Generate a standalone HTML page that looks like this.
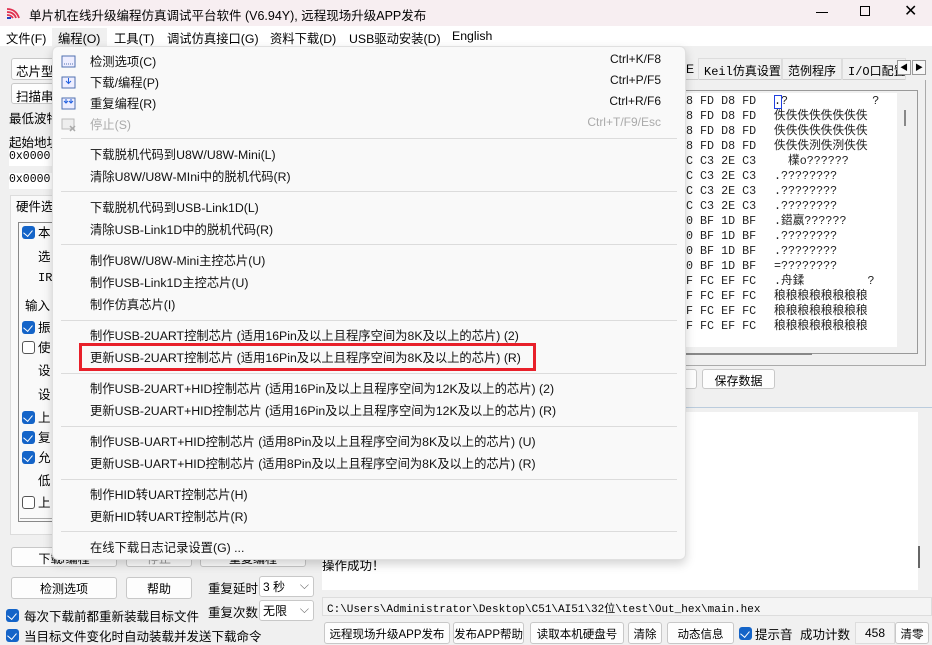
<!DOCTYPE html><html><head><meta charset="utf-8"><style>
*{box-sizing:border-box;margin:0;padding:0}
body{width:932px;height:644px;overflow:hidden;background:#f0f0f0;font-family:"Liberation Sans","Noto Sans CJK SC",sans-serif;font-size:12px;color:#000;position:relative}
.a{position:absolute;white-space:nowrap}
.btn{position:absolute;background:#fdfdfd;border:1px solid #c8c8c8;border-radius:3px;text-align:center;font-size:12px;white-space:nowrap;overflow:hidden}
.cb{position:absolute;width:13px;height:13px;border-radius:3px;background:#1464c8}
.cb:after{content:"";position:absolute;left:3px;top:2px;width:5px;height:7px;border:solid #fff;border-width:0 1.5px 1.5px 0;transform:rotate(40deg)}
.cbo{position:absolute;width:13px;height:13px;border-radius:3px;border:1px solid #555;background:#fff}
.mono{font-family:"Liberation Mono","Noto Sans CJK SC",monospace;font-size:12px}
.menu{position:absolute;left:52px;top:46px;width:634px;height:514px;background:#f9f9f9;border:1px solid #e0e0e0;border-radius:6px;box-shadow:0 4px 10px rgba(0,0,0,.18)}
.mi{position:absolute;left:37px;font-size:12.3px;color:#111}
.sep{position:absolute;left:8px;right:8px;height:1px;background:#dcdcdc}
.sc{position:absolute;right:24px;font-size:12px;color:#111}
.bb{font-size:11.5px;padding-top:3px}
</style></head><body>
<!-- title -->
<div class="a" style="left:0;top:0;width:932px;height:26px;background:#f7eef1"></div>
<svg class="a" style="left:6px;top:5px" width="16" height="16" viewBox="0 0 16 16"><path d="M1 4 Q10 4 13 13 M1 7 Q8 7 10 13 M1 10 Q5 10 7 13" stroke="#e03050" stroke-width="1.8" fill="none"/><rect x="1" y="12" width="4" height="2" fill="#2040c0"/></svg>
<div class="a" style="left:29px;top:5px;font-size:12.5px">单片机在线升级编程仿真调试平台软件 (V6.94Y), 远程现场升级APP发布</div>
<div class="a" style="left:816px;top:12px;width:12px;height:1px;background:#000"></div>
<div class="a" style="left:860px;top:6px;width:10px;height:10px;border:1px solid #000"></div>
<div class="a" style="left:904px;top:1px;font-size:16px">✕</div>
<!-- menubar -->
<div class="a" style="left:0;top:26px;width:932px;height:20px;background:#fff"></div>
<div class="a" style="left:52px;top:28px;width:55px;height:18px;background:#f0f0f0"></div>
<div class="a" style="left:6px;top:29px;font-size:12.3px">文件(F)</div>
<div class="a" style="left:58px;top:29px;font-size:12.3px">编程(O)</div>
<div class="a" style="left:114px;top:29px;font-size:12.3px">工具(T)</div>
<div class="a" style="left:167px;top:29px;font-size:12.3px">调试仿真接口(G)</div>
<div class="a" style="left:270px;top:29px;font-size:12.3px">资料下载(D)</div>
<div class="a" style="left:349px;top:29px;font-size:12.3px">USB驱动安装(D)</div>
<div class="a" style="left:452px;top:29px;font-size:12.3px">English</div>
<!-- left panel -->
<div class="btn" style="left:11px;top:58px;width:50px;height:22px;text-align:left;padding:2px 4px;font-size:12.5px">芯片型</div>
<div class="btn" style="left:11px;top:83px;width:50px;height:21px;text-align:left;padding:2px 4px;font-size:12.5px">扫描串</div>
<div class="a" style="left:9px;top:108px;font-size:12.5px">最低波特</div>
<div class="a" style="left:9px;top:132px;font-size:12.5px">起始地址</div>
<div class="a mono" style="left:9px;top:150px;width:50px;height:16px;background:#fff;font-size:11.5px;padding-top:0">0x0000</div>
<div class="a mono" style="left:9px;top:173px;width:50px;height:16px;background:#fff;font-size:11.5px;padding-top:0">0x0000</div>
<div class="a" style="left:10px;top:195px;width:50px;height:340px;border:1px solid #dcdcdc;background:#f9f9f9"></div>
<div class="a" style="left:16px;top:196px;font-size:12.5px">硬件选</div>
<div class="a" style="left:18px;top:222px;width:40px;height:300px;border:1px solid #888;border-right:none"></div>
<div class="cb" style="left:22px;top:226px"></div><div class="a" style="left:38px;top:222px;font-size:12.5px">本</div>
<div class="a" style="left:38px;top:246px;font-size:12.5px">选</div>
<div class="a mono" style="left:38px;top:271px">IR</div>
<div class="a" style="left:25px;top:295px;font-size:12.5px">输入</div>
<div class="cb" style="left:22px;top:321px"></div><div class="a" style="left:38px;top:317px;font-size:12.5px">振</div>
<div class="cbo" style="left:22px;top:341px"></div><div class="a" style="left:38px;top:337px;font-size:12.5px">使</div>
<div class="a" style="left:38px;top:360px;font-size:12.5px">设</div>
<div class="a" style="left:38px;top:384px;font-size:12.5px">设</div>
<div class="cb" style="left:22px;top:411px"></div><div class="a" style="left:38px;top:407px;font-size:12.5px">上</div>
<div class="cb" style="left:22px;top:431px"></div><div class="a" style="left:38px;top:427px;font-size:12.5px">复</div>
<div class="cb" style="left:22px;top:451px"></div><div class="a" style="left:38px;top:447px;font-size:12.5px">允</div>
<div class="a" style="left:38px;top:470px;font-size:12.5px">低</div>
<div class="cbo" style="left:22px;top:496px"></div><div class="a" style="left:38px;top:492px;font-size:12.5px">上</div>
<div class="a" style="left:20px;top:518px;width:32px;height:1px;background:#aaa"></div>
<div class="btn" style="left:11px;top:547px;width:106px;height:20px;padding-top:2px">下载/编程</div>
<div class="btn" style="left:126px;top:547px;width:66px;height:20px;padding-top:2px;color:#999">停止</div>
<div class="btn" style="left:200px;top:547px;width:106px;height:20px;padding-top:2px">重复编程</div>
<div class="btn" style="left:11px;top:577px;width:106px;height:22px;padding-top:2px">检测选项</div>
<div class="btn" style="left:126px;top:577px;width:66px;height:22px;padding-top:2px">帮助</div>
<div class="a" style="left:208px;top:578px;font-size:12.5px">重复延时</div>
<div class="a" style="left:259px;top:576px;width:55px;height:21px;background:#fff;border:1px solid #c8c8c8;border-radius:3px;padding:1px 3px">3 秒<span style="position:absolute;right:4px;top:1px;color:#666">⌵</span></div>
<div class="a" style="left:208px;top:602px;font-size:12.5px">重复次数</div>
<div class="a" style="left:259px;top:600px;width:55px;height:21px;background:#fff;border:1px solid #c8c8c8;border-radius:3px;padding:1px 3px">无限<span style="position:absolute;right:4px;top:1px;color:#666">⌵</span></div>
<div class="cb" style="left:6px;top:609px"></div><div class="a" style="left:24px;top:606px;font-size:12.5px">每次下载前都重新装载目标文件</div>
<div class="cb" style="left:6px;top:629px"></div><div class="a" style="left:24px;top:626px;font-size:12.5px">当目标文件变化时自动装载并发送下载命令</div>
<!-- right panel -->
<div class="a" style="left:686px;top:58px;width:220px;height:22px;background:#f0f0f0;border-bottom:1px solid #ccc"></div>
<div class="a" style="left:686px;top:62px;font-size:12px">E</div>
<div class="a" style="left:698px;top:58px;width:84px;height:22px;border:1px solid #ddd;border-bottom:none;padding:3px 5px"><span class="mono">Keil</span>仿真设置</div>
<div class="a" style="left:782px;top:58px;width:60px;height:22px;border:1px solid #ddd;border-bottom:none;padding:3px 5px">范例程序</div>
<div class="a" style="left:842px;top:58px;width:64px;height:22px;border:1px solid #ddd;border-bottom:none;padding:3px 5px;overflow:hidden"><span class="mono">I/O</span>口配置</div>
<div class="a" style="left:897px;top:60px;width:14px;height:15px;border:1px solid #999;background:#f8f8f8;font-size:8px;text-align:center;line-height:13px">◀</div>
<div class="a" style="left:912px;top:60px;width:14px;height:15px;border:1px solid #999;background:#f8f8f8;font-size:8px;text-align:center;line-height:13px">▶</div>
<div class="a" style="left:686px;top:80px;width:240px;height:286px;border-right:1px solid #aaa;border-bottom:1px solid #aaa"></div>
<div class="a" style="left:686px;top:90px;width:232px;height:264px;border:1px solid #999;border-left:none;background:#f0f0f0"></div>
<div class="a" style="left:686px;top:93px;width:211px;height:254px;background:#fff"></div>
<div class="a" style="left:904px;top:110px;width:2px;height:16px;background:#888"></div>
<div class="a" style="left:686px;top:353px;width:126px;height:2px;background:#888"></div>
<div class="a mono" style="left:686px;top:94px;line-height:15px;font-size:11.7px;color:#222">8 FD D8 FD<br>8 FD D8 FD<br>8 FD D8 FD<br>8 FD D8 FD<br>C C3 2E C3<br>C C3 2E C3<br>C C3 2E C3<br>C C3 2E C3<br>0 BF 1D BF<br>0 BF 1D BF<br>0 BF 1D BF<br>0 BF 1D BF<br>F FC EF FC<br>F FC EF FC<br>F FC EF FC<br>F FC EF FC</div>
<div class="a mono" style="left:774px;top:94px;line-height:15px;font-size:11.7px;color:#222">.?&nbsp;&nbsp;&nbsp;&nbsp;&nbsp;&nbsp;&nbsp;&nbsp;&nbsp;&nbsp;&nbsp;&nbsp;?<br>佚佚佚佚佚佚佚佚<br>佚佚佚佚佚佚佚佚<br>佚佚佚洌佚洌佚佚<br>&nbsp;&nbsp;檏o??????<br>.????????<br>.????????<br>.????????<br>.鍣嬴??????<br>.????????<br>.????????<br>=????????<br>.舟鍒&nbsp;&nbsp;&nbsp;&nbsp;&nbsp;&nbsp;&nbsp;&nbsp;&nbsp;?<br>稂稂稂稂稂稂稂稂<br>稂稂稂稂稂稂稂稂<br>稂稂稂稂稂稂稂稂</div>
<div class="a" style="left:774px;top:95px;width:8px;height:14px;border:1px solid #2040e0"></div>
<div class="btn" style="left:680px;top:369px;width:17px;height:20px"></div>
<div class="btn" style="left:702px;top:369px;width:73px;height:20px;padding-top:2px">保存数据</div>
<div class="a" style="left:320px;top:407px;width:612px;height:1px;background:#bcd"></div>
<div class="a" style="left:322px;top:412px;width:596px;height:178px;background:#fff"></div>
<div class="a" style="left:918px;top:546px;width:2px;height:22px;background:#666"></div>
<div class="a" style="left:322px;top:555px;font-size:12.5px">操作成功！</div>
<div class="a mono" style="left:322px;top:597px;width:610px;height:19px;background:#f4f4f4;border:1px solid #ddd;font-size:11px;padding:2px 4px">C:\Users\Administrator\Desktop\C51\AI51\32位\test\Out_hex\main.hex</div>
<div class="btn bb" style="left:324px;top:622px;width:126px;height:22px">远程现场升级APP发布</div>
<div class="btn bb" style="left:453px;top:622px;width:71px;height:22px">发布APP帮助</div>
<div class="btn bb" style="left:530px;top:622px;width:94px;height:22px">读取本机硬盘号</div>
<div class="btn bb" style="left:628px;top:622px;width:34px;height:22px">清除</div>
<div class="btn bb" style="left:667px;top:622px;width:67px;height:22px">动态信息</div>
<div class="cb" style="left:739px;top:627px"></div><div class="a" style="left:755px;top:624px;font-size:12.5px">提示音</div>
<div class="a" style="left:800px;top:624px;font-size:12.5px">成功计数</div>
<div class="a" style="left:855px;top:622px;width:40px;height:22px;background:#f4f4f4;border:1px solid #ddd;text-align:center;padding-top:3px">458</div>
<div class="btn bb" style="left:895px;top:622px;width:34px;height:22px">清零</div>
<!-- dropdown menu -->
<div class="menu">
<svg class="a" style="left:8px;top:6px" width="16" height="16"><rect x="1" y="3" width="13" height="11" fill="#eef" stroke="#5070b0"/><path d="M3 11h9" stroke="#5070b0" stroke-dasharray="1 1"/></svg>
<svg class="a" style="left:8px;top:27px" width="16" height="16"><rect x="1" y="3" width="13" height="11" fill="#eef" stroke="#5070b0"/><path d="M7.5 4v5M5 7l2.5 2.5L10 7" stroke="#2060e0" fill="none"/></svg>
<svg class="a" style="left:8px;top:48px" width="16" height="16"><rect x="1" y="3" width="13" height="11" fill="#eef" stroke="#5070b0"/><path d="M5 4v4M3 6l2 2 2-2M10 4v4M8 6l2 2 2-2" stroke="#2060e0" fill="none"/></svg>
<svg class="a" style="left:8px;top:69px" width="16" height="16"><rect x="1" y="3" width="12" height="10" fill="#eee" stroke="#bbb"/><path d="M9 10l5 5M14 10l-5 5" stroke="#aaa" stroke-width="1.5"/></svg>
<div class="mi" style="top:5px">检测选项(C)</div><div class="sc" style="top:5px">Ctrl+K/F8</div>
<div class="mi" style="top:26px">下载/编程(P)</div><div class="sc" style="top:26px">Ctrl+P/F5</div>
<div class="mi" style="top:47px">重复编程(R)</div><div class="sc" style="top:47px">Ctrl+R/F6</div>
<div class="mi" style="top:68px;color:#aaa">停止(S)</div><div class="sc" style="top:68px;color:#aaa">Ctrl+T/F9/Esc</div>
<div class="sep" style="top:91px"></div>
<div class="mi" style="top:98px">下载脱机代码到U8W/U8W-Mini(L)</div>
<div class="mi" style="top:120px">清除U8W/U8W-MIni中的脱机代码(R)</div>
<div class="sep" style="top:144px"></div>
<div class="mi" style="top:151px">下载脱机代码到USB-Link1D(L)</div>
<div class="mi" style="top:173px">清除USB-Link1D中的脱机代码(R)</div>
<div class="sep" style="top:197px"></div>
<div class="mi" style="top:204px">制作U8W/U8W-Mini主控芯片(U)</div>
<div class="mi" style="top:226px">制作USB-Link1D主控芯片(U)</div>
<div class="mi" style="top:248px">制作仿真芯片(I)</div>
<div class="sep" style="top:273px"></div>
<div class="mi" style="top:279px">制作USB-2UART控制芯片 (适用16Pin及以上且程序空间为8K及以上的芯片) (2)</div>
<div class="mi" style="top:301px">更新USB-2UART控制芯片 (适用16Pin及以上且程序空间为8K及以上的芯片) (R)</div>
<div class="a" style="left:26px;top:296px;width:457px;height:28px;border:3px solid #e8202a"></div>
<div class="sep" style="top:326px"></div>
<div class="mi" style="top:332px">制作USB-2UART+HID控制芯片 (适用16Pin及以上且程序空间为12K及以上的芯片) (2)</div>
<div class="mi" style="top:354px">更新USB-2UART+HID控制芯片 (适用16Pin及以上且程序空间为12K及以上的芯片) (R)</div>
<div class="sep" style="top:379px"></div>
<div class="mi" style="top:385px">制作USB-UART+HID控制芯片 (适用8Pin及以上且程序空间为8K及以上的芯片) (U)</div>
<div class="mi" style="top:407px">更新USB-UART+HID控制芯片 (适用8Pin及以上且程序空间为8K及以上的芯片) (R)</div>
<div class="sep" style="top:432px"></div>
<div class="mi" style="top:438px">制作HID转UART控制芯片(H)</div>
<div class="mi" style="top:460px">更新HID转UART控制芯片(R)</div>
<div class="sep" style="top:484px"></div>
<div class="mi" style="top:491px">在线下载日志记录设置(G) ...</div>
</div>
</body></html>
